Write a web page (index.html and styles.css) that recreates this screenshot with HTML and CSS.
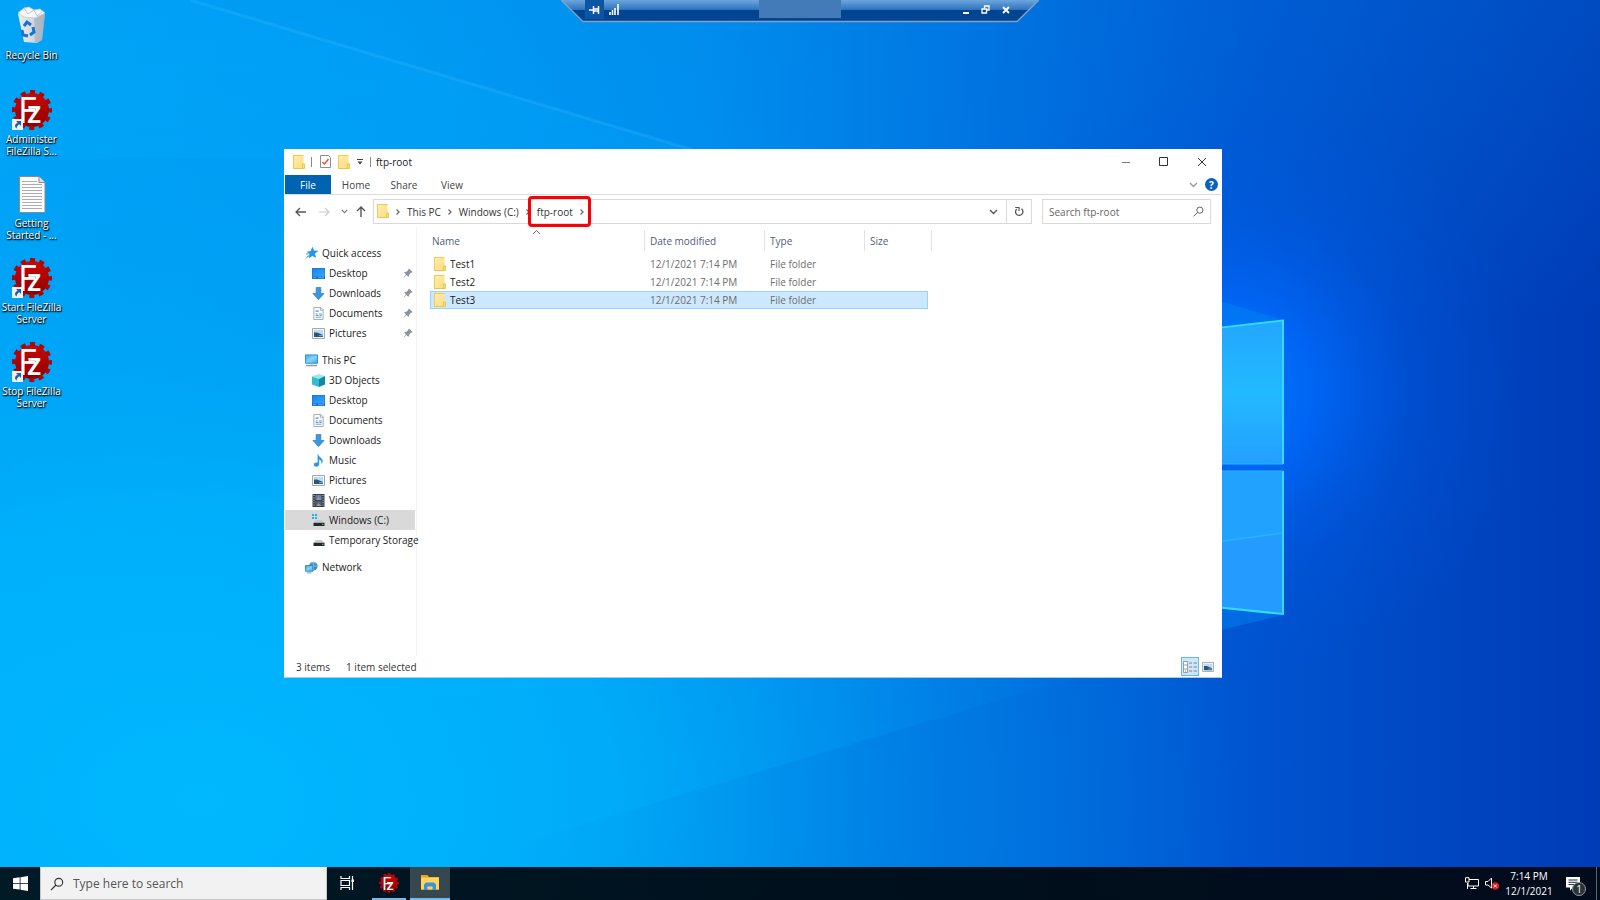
FILE: index.html
```html
<!DOCTYPE html>
<html lang="en">
<head>
<meta charset="utf-8">
<title>ftp-root</title>
<link rel="stylesheet" href="styles.css">
</head>
<body>
<svg class="defs" aria-hidden="true">
  <defs>
    <linearGradient id="g-fold" x1="0" y1="0" x2="1" y2="1"><stop offset="0" stop-color="#ffeeb0"/><stop offset="1" stop-color="#fbdc7c"/></linearGradient>
    <linearGradient id="g-red" x1="0" y1="0" x2="0" y2="1"><stop offset="0" stop-color="#cb0808"/><stop offset="1" stop-color="#8c0000"/></linearGradient>
    <linearGradient id="g-screen" x1="0" y1="0" x2="1" y2="1"><stop offset="0" stop-color="#1583e6"/><stop offset="1" stop-color="#35a9fb"/></linearGradient>
    <linearGradient id="g-pc" x1="0" y1="0" x2="1" y2="1"><stop offset="0" stop-color="#3fa9ee"/><stop offset=".5" stop-color="#85d3fb"/><stop offset="1" stop-color="#43a6ea"/></linearGradient>
    <linearGradient id="g-bin" x1="0" y1="0" x2="1" y2="0"><stop offset="0" stop-color="#e9edf1"/><stop offset=".55" stop-color="#d3d9df"/><stop offset="1" stop-color="#a9b3be"/></linearGradient>
  </defs>
  <symbol id="i-folder" viewBox="0 0 12 14"><path d="M.5.5h10v8h1v5H.5z" fill="url(#g-fold)"/><path d="M.5.5h10M.5 0v14" stroke="#f1cb4e" fill="none"/><path d="M.5 13.5h11V9h-2v4.500" fill="#fbe08a" stroke="#ecc750"/></symbol>
  <symbol id="i-gear" viewBox="0 0 40 40"><circle cx="20" cy="20" r="17" fill="url(#g-red)"/><circle cx="20" cy="20" r="18" fill="none" stroke="#b00505" stroke-width="4" stroke-dasharray="5 4.425" stroke-dashoffset="2.500"/></symbol>
  <symbol id="i-shortcut" viewBox="0 0 11 11"><path d="M0 0h11v11H0z" fill="#eef3f8"/><path d="M4 2h5v5L7.300 5.300C5.500 6.300 5 7.500 4.500 9.500 2 7 3 5 5.700 3.700z" fill="#1b5fae"/></symbol>
  <symbol id="i-desktop" viewBox="0 0 13 11"><path d="M0 0h13v11H0z" fill="#0f74d4"/><path d="M.5.5h12v8H.5z" fill="url(#g-screen)"/><path d="M1 9.700h3M6 9.700h6" stroke="#8cc9f5" stroke-width=".7"/></symbol>
  <symbol id="i-down" viewBox="0 0 14 14"><path d="M4.500.5h5V7H13L7 13.500 1 7h3.500z" fill="#3b96e4" stroke="#2c7fcd" stroke-width=".8"/></symbol>
  <symbol id="i-doc" viewBox="0 0 12 14"><path d="M1 .5h7.500L11 3v10.500H1z" fill="#fafcfd" stroke="#9da6ad"/><path d="M8 .5V3.500h3" fill="none" stroke="#9da6ad"/><path d="M3 3.500h3v2H3zM3 10.500h6v1H3z" fill="#7ba9d4"/><path d="M3 7.500h2M6.500 7.500h3M3 9.200h3M7 9.200h2.500" stroke="#4c91d0"/></symbol>
  <symbol id="i-pic" viewBox="0 0 13 11"><path d="M.5.5h12v10H.5z" fill="#f3f5f6" stroke="#a2a9ae"/><path d="M2 2h9v7H2z" fill="#b8dcf5"/><path d="M2 4.500 5 4.500 11 7v2H2z" fill="#285875"/><path d="M7 7h4v1.200H7z" fill="#62a8d6"/></symbol>
  <symbol id="i-pc" viewBox="0 0 14 13"><path d="M.5.5h13v9H.5z" fill="url(#g-pc)" stroke="#278bcf"/><path d="M1 12h12" stroke="#8e9ca8" stroke-width="1.500"/><path d="M5.500 10h3v1.500h-3z" fill="#c7d0d8"/></symbol>
  <symbol id="i-3d" viewBox="0 0 13 13"><path d="M0 2.500 6.500 0 13 2 7 5z" fill="#9ee7ee"/><path d="M0 2.500 7 5v8L0 10.500z" fill="#33bdd0"/><path d="M13 2 7 5v8l6-2.500z" fill="#0c8aa6"/></symbol>
  <symbol id="i-music" viewBox="0 0 12 14"><path d="M5.500 0C6 3.500 10.500 4 10.500 7.500c0 1.500-.6 2.500-1.400 3.300C9.700 8 8.500 6.500 6.700 6v5c0 1.600-1.500 2.600-3.200 2.600S1 12.600 1 11.500c0-1.400 1.700-2.600 4-2.100V0z" fill="#2a96ea"/></symbol>
  <symbol id="i-video" viewBox="0 0 12 13"><path d="M0 0h12v13H0z" fill="#3b3f46"/><path d="M3 1h6v5H3z" fill="#5a83bb"/><path d="M3 7h6v5H3z" fill="#3a6599"/><path d="m4 6 2-3 3 3zM4 12l2-3 3 3z" fill="#c3925b"/><path d="M1.500 1v12M10.500 1v12" stroke="#d4d8dd" stroke-dasharray="1 1.400"/></symbol>
  <symbol id="i-drive" viewBox="0 0 13 12"><path d="M3.500 5h6.500L12.500 8h-11z" fill="#c6cbcf"/><path d="M1.500 7.800h11V11h-11z" fill="#26292c"/><path d="M10 9.300h1.500" stroke="#51e06c"/></symbol>
  <symbol id="i-win" viewBox="0 0 5 5"><path d="M0 0h2v2H0zM3 0h2v2H3zM0 3h2v2H0zM3 3h2v2H3z" fill="#20b2f2"/></symbol>
  <symbol id="i-net" viewBox="0 0 14 13"><circle cx="9" cy="5" r="4.600" fill="#3d8fbd"/><path d="M6 2q3-2 6 0M5 5h8M9 .5v9" stroke="#a8dcf4" fill="none" stroke-width=".7"/><path d="M.5 4.500h8v6h-8z" fill="url(#g-pc)" stroke="#2b81b5"/><path d="M2 12.300h5" stroke="#7f8c98"/></symbol>
  <symbol id="i-star" viewBox="0 0 13 13"><path d="M7.500.5 8.700 4l3.800.1-3 2.400 1 3.700-3.200-1.700-3 2.200.6-3.600-2.400-2 3.300-.7z" fill="#2594e8" stroke="#2594e8" stroke-width=".8"/><path d="M1 11.500 4.500 8M1 7h2.500M2 9.200h2" stroke="#4aa8ed"/></symbol>
  <symbol id="i-pin" viewBox="0 0 10 10"><path d="M6 .5 9.500 4 8.500 4.800 8 4.700 6.300 6.400 6 8.300 5.200 8.700 3.500 7 .8 9.500.5 9.200 3 6.500 1.300 4.800l.4-.8 1.900-.3L5.300 2l-.1-.6z" fill="#89949c"/></symbol>
  <symbol id="i-chev" viewBox="0 0 6 8"><path d="M1.500 1.500 4 4 1.500 6.500" fill="none" stroke="#666" stroke-width="1.200"/></symbol>
  <symbol id="i-vee" viewBox="0 0 9 6"><path d="M1 1 4.500 4.500 8 1" fill="none" stroke="currentColor" stroke-width="1.400"/></symbol>
  <symbol id="i-mag" viewBox="0 0 16 16"><circle cx="10" cy="6" r="4.500" fill="none" stroke="currentColor" stroke-width="1.300"/><path d="M6.800 9.200 1 15" stroke="currentColor" stroke-width="1.400"/></symbol>
</svg>

<main class="desktop">
  <svg class="wallpaper" viewBox="0 0 1600 867" preserveAspectRatio="none" aria-hidden="true">
    <defs>
      <linearGradient id="w-base" x1="0" y1="0" x2="1" y2="0"><stop offset="0" stop-color="#00a8fa"/><stop offset=".25" stop-color="#00a0f6"/><stop offset=".45" stop-color="#008eee"/><stop offset=".62" stop-color="#0070e0"/><stop offset=".78" stop-color="#0054d0"/><stop offset="1" stop-color="#003bb6"/></linearGradient>
      <radialGradient id="w-low" gradientUnits="userSpaceOnUse" cx="200" cy="800" r="1050" gradientTransform="matrix(1 0 0 .7 0 240)"><stop offset="0" stop-color="#00b8fe"/><stop offset=".4" stop-color="#00b2fb" stop-opacity=".75"/><stop offset=".7" stop-color="#009cf0" stop-opacity=".3"/><stop offset="1" stop-color="#0088e6" stop-opacity="0"/></radialGradient>
      <radialGradient id="w-glow" gradientUnits="userSpaceOnUse" cx="1230" cy="390" r="300"><stop offset="0" stop-color="#0078ff"/><stop offset=".3" stop-color="#0068fa" stop-opacity=".8"/><stop offset=".6" stop-color="#005cea" stop-opacity=".3"/><stop offset="1" stop-color="#0050d8" stop-opacity="0"/></radialGradient>
      <linearGradient id="w-top" x1="0" y1="0" x2="0" y2="1"><stop offset="0" stop-color="#0082e4" stop-opacity=".55"/><stop offset="1" stop-color="#0090f0" stop-opacity="0"/></linearGradient>
      <linearGradient id="w-pane" x1="0" y1="0" x2="0" y2="1"><stop offset="0" stop-color="#22a6ff"/><stop offset=".5" stop-color="#22baff"/><stop offset="1" stop-color="#239fff"/></linearGradient>
      <linearGradient id="w-shade" gradientUnits="userSpaceOnUse" x1="500" y1="0" x2="1284" y2="0"><stop offset="0" stop-color="#0058cc" stop-opacity="0"/><stop offset=".5" stop-color="#0058cc" stop-opacity=".16"/><stop offset="1" stop-color="#0058cc" stop-opacity="0"/></linearGradient>
    </defs>
    <path d="M0 0h1600v867H0z" fill="url(#w-base)"/>
    <path d="M0 0h1600v320H0z" fill="url(#w-top)" opacity=".4"/>
    <path d="M0 0h1600v867H0z" fill="url(#w-low)"/>
    <path d="M190 0 720 158H0V0z" fill="#00b4ff" opacity=".18"/>
    <path d="M190 0 720 158" stroke="#35b5ff" stroke-width="3" opacity=".3"/>
    <path d="M1284 615 440 867H1284z" fill="url(#w-shade)"/>
    <path d="M0 705 300 675V867H0z" fill="#00beff" opacity=".1"/>
    <path d="M0 0h1600v867H0z" fill="url(#w-glow)"/>
    <path d="M1200 295 1284 320 1200 330zM1200 605 1284 615 1200 635z" fill="#008cf8" opacity=".4"/>
    <path d="M1200 331 1283 321V464H1200z" fill="url(#w-pane)"/>
    <path d="M1200 471H1283V614L1200 606z" fill="#249cff"/>
    <path d="M1200 471H1283V533L1200 544z" fill="#20a8ff" opacity=".5"/>
    <path d="M1200 544 1283 533" stroke="#28b4ff" stroke-width="1.500"/>
    <path d="M1200 330 1283 320.500V464M1283 471V614L1200 605.500" fill="none" stroke="#32dcff" stroke-width="2"/>
    <path d="M1200 464H1283M1200 471H1283" stroke="#22b8ff"/>
  </svg>

  <nav class="shortcuts" aria-label="Desktop">
    <button class="shortcut"><span class="pic"><svg class="big" viewBox="0 0 40 40"><path d="M6 8 33 8 30 34 25 37 12 36z" fill="url(#g-bin)"/><path d="m22 10 11-2-3 26-7 3z" fill="#a7b1bd" opacity=".6"/><path d="m6 7 6-5 5-1 5 3 6-1 5 4-10 5-11-1z" fill="#f7f8fa" stroke="#c3cad1" stroke-width=".8"/><path d="m12 2 4 6 6-4 3 6 5-4" fill="none" stroke="#bec7ce"/><path d="m12 20 3-4 4 3M21 21l1 5-4 3M16 30l-5-1-1-5" fill="none" stroke="#1674d1" stroke-width="3"/></svg></span><span class="cap">Recycle Bin</span></button>
    <button class="shortcut"><span class="pic"><svg class="big" viewBox="0 0 40 40" aria-hidden="true"><use href="#i-gear"/><text class="fz" x="6" y="33">F<tspan class="z" x="15">z</tspan></text></svg><svg class="arrow"><use href="#i-shortcut"/></svg></span><span class="cap">Administer<br>FileZilla S...</span></button>
    <button class="shortcut"><span class="pic"><svg class="big" viewBox="0 0 40 40"><path d="M7.500 2.500H27l6 6v30H7.500z" fill="#fcfcfc" stroke="#858b90"/><path d="M27 2.500v6h6" fill="#dce0e2" stroke="#858b90"/><path d="M10 7.500h15M10 10.500h20M10 13.500h20M10 16.500h20M10 19.500h20M10 22.500h20M10 25.500h20M10 28.500h20M10 31.500h20M10 34.500h20" stroke="#aaaeb1"/></svg></span><span class="cap">Getting<br>Started - ...</span></button>
    <button class="shortcut"><span class="pic"><svg class="big" viewBox="0 0 40 40" aria-hidden="true"><use href="#i-gear"/><text class="fz" x="6" y="33">F<tspan class="z" x="15">z</tspan></text></svg><svg class="arrow"><use href="#i-shortcut"/></svg></span><span class="cap">Start FileZilla<br>Server</span></button>
    <button class="shortcut"><span class="pic"><svg class="big" viewBox="0 0 40 40" aria-hidden="true"><use href="#i-gear"/><text class="fz" x="6" y="33">F<tspan class="z" x="15">z</tspan></text></svg><svg class="arrow"><use href="#i-shortcut"/></svg></span><span class="cap">Stop FileZilla<br>Server</span></button>
  </nav>

  <div class="remote-bar">
    <svg class="remote-shape" viewBox="0 0 480 23" preserveAspectRatio="none" aria-hidden="true">
      <defs><linearGradient id="r-a" x1="0" y1="0" x2="0" y2="1"><stop offset="0" stop-color="#6ea6de"/><stop offset=".45" stop-color="#2d74bd"/><stop offset=".46" stop-color="#02438f"/><stop offset="1" stop-color="#044694"/></linearGradient></defs>
      <path d="M0 0h480L458 21.500H22z" fill="url(#r-a)"/><path d="M0 0 22 21.500H458L480 0" fill="none" stroke="#7f9fc6" stroke-width="1.400"/>
    </svg>
    <div class="remote-tools">
      <button class="rb pinned" aria-label="Pin"><svg width="12" height="10" viewBox="0 0 12 10"><path d="M0 5h4M4.500 1v8M9.500 1v8M5 4h5M5 6h5" stroke="#fff" stroke-width="1.500"/></svg></button>
      <button class="rb" aria-label="Connection"><svg width="11" height="11" viewBox="0 0 11 11"><path d="M1 8v3M3.500 6v5M6 4v7M9 0v11" stroke="#fff" stroke-width="1.600"/></svg></button>
    </div>
    <div class="remote-name"></div>
    <div class="remote-tools end">
      <button class="rb" aria-label="Minimize"><svg width="8" height="10" viewBox="0 0 8 10"><path d="M1 8h6" stroke="#fff" stroke-width="2"/></svg></button>
      <button class="rb" aria-label="Restore"><svg width="9" height="9" viewBox="0 0 9 9"><path d="M3.500 3V1h4.500v4H6M1 4h4.500v4H1z" fill="none" stroke="#fff" stroke-width="1.300"/></svg></button>
      <button class="rb" aria-label="Close"><svg width="8" height="8" viewBox="0 0 8 8"><path d="m1 1 6 6M7 1 1 7" stroke="#fff" stroke-width="1.900"/></svg></button>
    </div>
  </div>

  <section class="window" aria-label="ftp-root">
    <header class="titlebar">
      <svg class="folder"><use href="#i-folder"/></svg><i class="bar"></i>
      <svg class="check" viewBox="0 0 11 13"><path d="M.5.5h8l2 2v10H.5z" fill="#fff" stroke="#8b8f93"/><path d="M2.500 7 4.500 9 8.500 4" fill="none" stroke="#e0562f" stroke-width="1.500"/></svg>
      <svg class="folder"><use href="#i-folder"/></svg>
      <svg class="qat" viewBox="0 0 6 6"><path d="M0 .5h6" stroke="#444"/><path d="M.5 2.500h5L3 5.500z" fill="#444"/></svg><i class="bar near"></i>
      <h1 class="title">ftp-root</h1>
      <div class="controls">
        <button aria-label="Minimize"><svg width="10" height="10" viewBox="0 0 10 10"><path d="M1 5.500h8" stroke="#777"/></svg></button>
        <button aria-label="Maximize"><svg width="10" height="10" viewBox="0 0 10 10"><path d="M.5.5h8v8h-8z" fill="none" stroke="#333"/></svg></button>
        <button aria-label="Close"><svg width="10" height="10" viewBox="0 0 10 10"><path d="m1 1 8 8M9 1 1 9" stroke="#333"/></svg></button>
      </div>
    </header>
    <div class="ribbon">
      <button class="file">File</button><button class="tab">Home</button><button class="tab">Share</button><button class="tab">View</button>
      <button class="expand" aria-label="Expand ribbon"><svg class="vee"><use href="#i-vee"/></svg></button>
      <button class="help" aria-label="Help">?</button>
    </div>
    <div class="address">
      <div class="history">
        <button aria-label="Back"><svg width="11" height="10" viewBox="0 0 11 10"><path d="M5 1 1 5l4 4M1 5h10" fill="none" stroke="#555" stroke-width="1.300"/></svg></button>
        <button aria-label="Forward"><svg width="11" height="10" viewBox="0 0 11 10"><path d="m6 1 4 4-4 4M10 5H0" fill="none" stroke="#ccc" stroke-width="1.200"/></svg></button>
        <button class="recent" aria-label="Recent"><svg width="7" height="5"><use href="#i-vee"/></svg></button>
        <button class="up" aria-label="Up"><svg width="10" height="11" viewBox="0 0 10 11"><path d="M1 5 5 1l4 4M5 1v10" fill="none" stroke="#555" stroke-width="1.400"/></svg></button>
      </div>
      <div class="path">
        <svg class="folder"><use href="#i-folder"/></svg>
        <svg class="chev"><use href="#i-chev"/></svg><button class="crumb">This PC</button>
        <svg class="chev"><use href="#i-chev"/></svg><button class="crumb">Windows (C:)</button>
        <svg class="chev"><use href="#i-chev"/></svg><span class="marked"><button class="crumb">ftp-root</button><svg class="chev"><use href="#i-chev"/></svg></span>
        <button class="drop" aria-label="Previous locations"><svg class="vee"><use href="#i-vee"/></svg></button>
        <button class="refresh" aria-label="Refresh"><svg width="10" height="11" viewBox="0 0 10 11"><path d="M7.500 2.800A3.700 3.700 0 1 1 2.700 3" fill="none" stroke="#555" stroke-width="1.300"/><path d="M1.200 1.500H5V5" fill="none" stroke="#555" stroke-width="1.200"/></svg></button>
      </div>
      <label class="search"><input type="text" placeholder="Search ftp-root" aria-label="Search ftp-root"><svg width="11" height="11"><use href="#i-mag"/></svg></label>
    </div>
    <div class="body">
      <nav class="tree" aria-label="Folders">
        <ul>
          <li><a href="#"><svg><use href="#i-star"/></svg><span>Quick access</span></a></li>
          <li class="sub"><a href="#"><svg><use href="#i-desktop"/></svg><span>Desktop</span><svg class="pin"><use href="#i-pin"/></svg></a></li>
          <li class="sub"><a href="#"><svg><use href="#i-down"/></svg><span>Downloads</span><svg class="pin"><use href="#i-pin"/></svg></a></li>
          <li class="sub"><a href="#"><svg><use href="#i-doc"/></svg><span>Documents</span><svg class="pin"><use href="#i-pin"/></svg></a></li>
          <li class="sub"><a href="#"><svg><use href="#i-pic"/></svg><span>Pictures</span><svg class="pin"><use href="#i-pin"/></svg></a></li>
        </ul>
        <ul>
          <li><a href="#"><svg><use href="#i-pc"/></svg><span>This PC</span></a></li>
          <li class="sub"><a href="#"><svg><use href="#i-3d"/></svg><span>3D Objects</span></a></li>
          <li class="sub"><a href="#"><svg><use href="#i-desktop"/></svg><span>Desktop</span></a></li>
          <li class="sub"><a href="#"><svg><use href="#i-doc"/></svg><span>Documents</span></a></li>
          <li class="sub"><a href="#"><svg><use href="#i-down"/></svg><span>Downloads</span></a></li>
          <li class="sub"><a href="#"><svg><use href="#i-music"/></svg><span>Music</span></a></li>
          <li class="sub"><a href="#"><svg><use href="#i-pic"/></svg><span>Pictures</span></a></li>
          <li class="sub"><a href="#"><svg><use href="#i-video"/></svg><span>Videos</span></a></li>
          <li class="sub current"><a href="#"><svg viewBox="0 0 13 13"><use href="#i-drive" x="0" y="1" width="13" height="12"/><use href="#i-win" width="5" height="5"/></svg><span>Windows (C:)</span></a></li>
          <li class="sub"><a href="#"><svg viewBox="0 0 13 13"><use href="#i-drive" x="0" y="1" width="13" height="12"/></svg><span>Temporary Storage</span></a></li>
        </ul>
        <ul>
          <li><a href="#"><svg><use href="#i-net"/></svg><span>Network</span></a></li>
        </ul>
      </nav>
      <div class="files">
        <table>
          <colgroup><col class="c-name"><col class="c-date"><col class="c-type"><col class="c-size"><col class="c-end"></colgroup>
          <thead><tr><th>Name<svg class="caret" viewBox="0 0 9 6"><path d="M1 5 4.500 1.500 8 5" fill="none" stroke="#777"/></svg></th><th>Date modified</th><th>Type</th><th colspan="2">Size</th></tr></thead>
          <tbody>
            <tr><td><span class="name"><svg class="folder"><use href="#i-folder"/></svg>Test1</span></td><td>12/1/2021 7:14 PM</td><td>File folder</td><td></td></tr>
            <tr><td><span class="name"><svg class="folder"><use href="#i-folder"/></svg>Test2</span></td><td>12/1/2021 7:14 PM</td><td>File folder</td><td></td></tr>
            <tr class="selected"><td><span class="name"><svg class="folder"><use href="#i-folder"/></svg>Test3</span></td><td>12/1/2021 7:14 PM</td><td>File folder</td><td></td></tr>
          </tbody>
        </table>
      </div>
    </div>
    <footer class="status">
      <span>3 items</span><span>1 item selected</span>
      <div class="views">
        <button class="on" aria-label="Details"><svg width="14" height="12" viewBox="0 0 14 12"><path d="M.5.5h4v11h-4zM.5 4h4M.5 8h4" fill="#fff" stroke="#9a9fa3"/><path d="M6 2h3M10.500 2H14M6 6h3M10.500 6H14M6 10h3M10.500 10H14" stroke="#7d858b"/><path d="M2 10h1" stroke="#d54"/></svg></button>
        <button aria-label="Large icons"><svg width="12" height="10"><use href="#i-pic"/></svg></button>
      </div>
    </footer>
  </section>
</main>

<footer class="taskbar">
  <button class="start" aria-label="Start"><svg width="15" height="15" viewBox="0 0 15 15"><path d="M0 2.300 6.700 1.300V7H0zM7.500 1.200 15 0v7H7.500zM0 7.800h6.700v5.800L0 12.700zM7.500 7.800H15V15l-7.500-1.200z" fill="#fff"/></svg></button>
  <label class="find"><svg width="14" height="14"><use href="#i-mag"/></svg><input type="text" placeholder="Type here to search" aria-label="Type here to search"></label>
  <button class="task" aria-label="Task View"><svg width="14" height="14" viewBox="0 0 14 14"><path d="M1 0v2.500h8.500V0M1 14v-2.500h8.500V14M1 4.500h8.500v5H1zM12.500 0v14" fill="none" stroke="#fff" stroke-width="1.200"/><path d="M11.500 3.500h2.500v2.500h-2.500z" fill="#fff"/></svg></button>
  <button class="task running" aria-label="FileZilla Server"><svg width="20" height="20" viewBox="0 0 40 40" aria-hidden="true"><use href="#i-gear"/><text class="fz" x="6" y="33">F<tspan class="z" x="15">z</tspan></text></svg></button>
  <button class="task active" aria-label="File Explorer"><svg width="18" height="15" viewBox="0 0 18 15"><path d="M0 0h6.500L8 2h10v13H0z" fill="#e8a41c"/><path d="M0 2.500h18V14H0z" fill="#ffd35e"/><path d="M3 15V9.500L5 7.500h8l2 2V15h-3.500v-3.500h-5V15z" fill="#3a94dc"/></svg></button>
  <div class="tray">
    <button aria-label="Network"><svg width="14" height="13" viewBox="0 0 14 13"><path d="M4 2.500h9.500v6.500H3V6M5.500 11.500h6M8.500 9v2.500M2.500 6v6M.5.700H4V5H.5z" fill="none" stroke="#fff"/></svg></button>
    <button aria-label="Volume"><svg width="14" height="13" viewBox="0 0 14 13"><path d="M.5 4.500H3L6.500 1v10L3 8H.5z" fill="none" stroke="#fff"/><circle cx="10.300" cy="9" r="3.700" fill="#d81c1c"/><path d="m8.800 7.500 3 3M11.800 7.500l-3 3" stroke="#fff"/></svg></button>
    <button class="clock"><span>7:14 PM</span><span>12/1/2021</span></button>
    <button class="notes" aria-label="Notifications"><svg width="14" height="14" viewBox="0 0 14 14"><path d="M0 0h14v10.500H7L4 13.500v-3H0z" fill="#fff"/><path d="M2.500 3h9M2.500 5.300h9M2.500 7.600h9" stroke="#04121e" stroke-width=".9"/></svg><span class="badge">1</span></button>
    <button class="peek" aria-label="Show desktop"></button>
  </div>
</footer>
</body>
</html>
```
FILE: styles.css
```css
* { box-sizing: border-box; }

body {
  margin: 0;
  height: 100vh;
  display: grid;
  grid-template-rows: minmax(0, 1fr) 33px;
  overflow: hidden;
  font: 10px/12px "Open Sans", "Noto Sans", sans-serif;
  color: #1a1a1a;
}

button, input {
  font: inherit;
  color: inherit;
  background: none;
  border: 0;
  padding: 0;
  margin: 0;
}

button { display: flex; align-items: center; justify-content: center; white-space: nowrap; }
svg { display: block; flex: none; }
ul { list-style: none; margin: 0; padding: 0; }
a { color: inherit; text-decoration: none; }

.defs { position: absolute; width: 0; height: 0; }
.fz { fill: #fff; font-size: 36px; font-weight: 400; text-shadow: none; }
.z { font-size: 30px; font-weight: 600; }

/* Desktop */
.desktop { position: relative; overflow: hidden; background: #0070dc; }
.wallpaper { position: absolute; inset: 0; width: 100%; height: 100%; }

.shortcuts {
  position: relative;
  width: 63px;
  padding-top: 6px;
  display: flex;
  flex-direction: column;
}
.shortcut {
  height: 84px;
  flex-direction: column;
  justify-content: flex-start;
  gap: 3px;
  color: #fff;
  text-shadow: 0 1px 2px #000, 1px 1px 1px #000;
}
.pic { position: relative; }
.big { width: 40px; height: 40px; }
.arrow { position: absolute; left: 0; bottom: 0; width: 11px; height: 11px; }

/* Remote session bar */
.remote-bar {
  position: absolute;
  top: 0;
  left: 50%;
  width: 478px;
  height: 23px;
  margin-left: -239px;
  padding: 0 24px;
  display: grid;
  grid-template-columns: 1fr 82px 1fr;
}
.remote-shape { position: absolute; inset: 0; width: 100%; height: 100%; }
.remote-tools { position: relative; display: flex; height: 19px; gap: 1px; }
.remote-tools.end { justify-content: flex-end; }
.rb { width: 19px; }
.pinned { background: #0a55a5; }
.remote-name { position: relative; height: 18px; background: #437bb8; }

/* Explorer window */
.window {
  position: absolute;
  top: 149px;
  right: 378px;
  bottom: 189px;
  left: 284px;
  display: flex;
  flex-direction: column;
  background: #fff;
  border: 1px solid #fff;
  border-bottom-color: #a9c8f0;
}
.folder { width: 12px; height: 14px; }

.titlebar { display: flex; align-items: center; height: 25px; padding: 0 0 2px 8px; flex: none; }
.bar { width: 1px; height: 10px; margin: 0 8px 0 6px; background: #888; }
.near { margin: 0 5px 0 7px; }
.check { width: 11px; height: 13px; margin-right: 7px; }
.qat { width: 6px; height: 6px; margin-left: 7px; }
.title { margin: 0; font-size: 10px; font-weight: 400; }
.controls { display: flex; margin-left: auto; height: 100%; }
.controls button { width: 38px; }

.ribbon { display: flex; height: 20px; flex: none; border-bottom: 1px solid #dcdcdc; color: #444; }
.file { width: 46px; margin-right: 1px; background: #0063b1; color: #fff; }
.tab { width: 48px; }
.expand { margin-left: auto; width: 18px; color: #999; }
.vee { width: 9px; height: 6px; }
.help {
  width: 13px;
  height: 13px;
  margin: 3px 3px 0 3px;
  border-radius: 50%;
  background: #0b5fbd;
  color: #fff;
  font-weight: 700;
}

.address { display: flex; height: 32px; padding: 4px 10px 3px 6px; flex: none; }
.history { display: flex; width: 82px; color: #777; }
.history button { width: 18px; }
.history button + button { width: 30px; }
.history .recent { width: 10px; }
.history .up { width: 23px; }
.path { display: flex; flex: 1; align-items: stretch; border: 1px solid #d9d9d9; min-width: 0; }
.path > .folder { margin: 4px 0 0 3px; }
.chev { width: 6px; height: 8px; margin: 8px 6px 0; }
.crumb { color: #333; }
.marked { position: relative; display: flex; }
.marked::after {
  content: "";
  position: absolute;
  inset: -4px 0 -4px -9px;
  border: 3px solid #fb0007;
  border-radius: 4px;
}
.drop { margin-left: auto; width: 25px; color: #555; }
.refresh { width: 25px; border-left: 1px solid #d9d9d9; }
.search {
  display: flex;
  align-items: center;
  width: 169px;
  margin-left: 10px;
  padding: 0 6px;
  border: 1px solid #d9d9d9;
  color: #555;
}
.search input { flex: 1; min-width: 0; }
input::placeholder { color: #666; opacity: 1; }

.body { display: flex; flex: 1; min-height: 0; }
.tree { width: 132px; padding-top: 16px; border-right: 1px solid #f3f3f3; }
.tree ul + ul { margin-top: 7px; }
.tree a { display: flex; align-items: center; gap: 4px; height: 20px; padding: 0 2px 0 20px; margin-right: 1px; }
.tree .sub a { padding-left: 27px; }
.tree svg { width: 13px; height: 13px; }
.tree span { flex: 1; white-space: nowrap; }
.tree .pin { width: 10px; height: 10px; }
.current a { background: #d9d9d9; }

.files { flex: 1; padding: 3px 0 0 13px; min-width: 0; }
table { border-collapse: separate; border-spacing: 0; table-layout: fixed; width: 502px; }
.c-name { width: 215px; }
.c-date { width: 120px; }
.c-type { width: 100px; }
.c-size { width: 63px; }
.c-end { width: 4px; }
th {
  position: relative;
  height: 21px;
  padding: 0 0 0 5px;
  border-right: 1px solid #e2e2e2;
  text-align: left;
  font-weight: 400;
  color: #4c607a;
}
th:first-child { padding-left: 2px; }
.caret { position: absolute; top: -1px; left: 102px; width: 9px; height: 6px; }
thead::after { content: ""; display: block; height: 4px; }
td { height: 18px; padding: 0 0 0 5px; color: #6d6d6d; white-space: nowrap; border: 0 solid #99d1ff; }
td:first-child { padding-left: 4px; color: #1a1a1a; }
.name { display: flex; align-items: center; gap: 4px; }
.selected td { background: #cce8ff; border-width: 1px 0; }
.selected td:first-child { border-left-width: 1px; padding-left: 3px; }
.selected td:last-child { border-right-width: 1px; }

.status { display: flex; align-items: center; gap: 16px; height: 21px; padding: 0 4px 0 11px; flex: none; color: #333; }
.views { display: flex; margin-left: auto; }
.views button { width: 18px; height: 19px; border: 1px solid transparent; }
.views .on { background: #cce8f7; border-color: #66b9e6; }

/* Taskbar */
.taskbar { display: flex; background: linear-gradient(90deg, #001a26, #000f1c 60%, #020b1c); color: #fff; }
.start { width: 40px; }
.find {
  display: flex;
  align-items: center;
  gap: 9px;
  flex: 0 1 287px;
  padding: 0 9px;
  background: #f2f2f2;
  border: 1px solid #c8c8c8;
  border-top-color: #fff;
  color: #333;
}
.find input { flex: 1; min-width: 0; font-size: 12px; line-height: 16px; }
.find input::placeholder { color: #555; }
.task { width: 40px; border-bottom: 2px solid transparent; }
.running { margin: 0 1px 0 5px; width: 34px; border-color: #76b9ed; }
.active { margin-left: 3px; background: #37474f; border-color: #76b9ed; }
.tray { display: flex; margin-left: auto; align-items: stretch; }
.tray button { width: 20px; }
.tray .clock { flex-direction: column; width: 54px; line-height: 15px; }
.tray .notes { position: relative; width: 34px; margin-right: 6px; }
.badge {
  position: absolute;
  right: 4px;
  bottom: 4px;
  width: 14px;
  height: 14px;
  border: 1px solid #999;
  border-radius: 50%;
  background: #2b333b;
  line-height: 12px;
}
.tray .peek { width: 4px; border-left: 1px solid #5a6570; }
```
